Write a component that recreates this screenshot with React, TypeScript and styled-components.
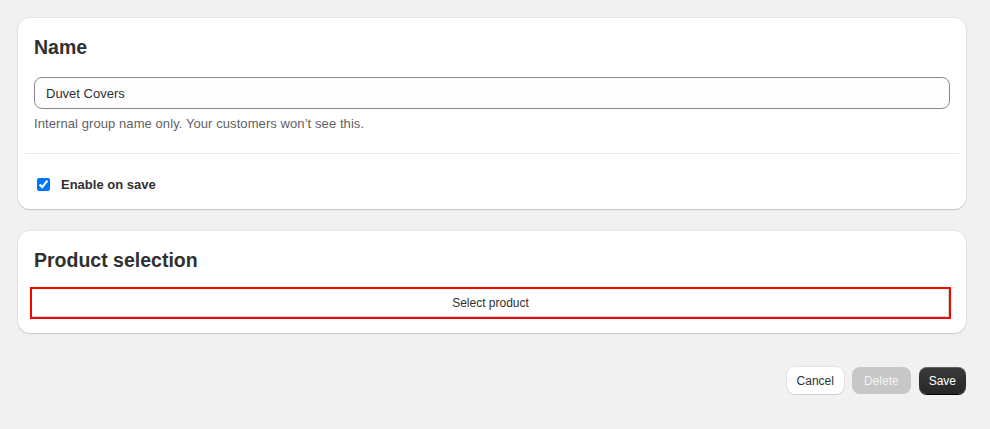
import React from "react";
import styled, { createGlobalStyle } from "styled-components";

const GlobalStyle = createGlobalStyle`
  html, body {
    margin: 0;
    padding: 0;
    background: #f1f1f1;
    font-family: "Liberation Sans", Arial, sans-serif;
    color: #303030;
  }
`;

const Page = styled.div`
  box-sizing: border-box;
  width: 990px;
  min-height: 429px;
  padding: 18px 24px 18px 18px;
  display: flex;
  flex-direction: column;
  gap: 22px;
`;

const Card = styled.section`
  background: #ffffff;
  border-radius: 12px;
  box-shadow: 0 1px 0 rgba(0, 0, 0, 0.07), 0 0 0 1px rgba(0, 0, 0, 0.04),
    0 1px 2px rgba(0, 0, 0, 0.08);
  padding: 17px 16px 14px;
  display: flex;
  flex-direction: column;
`;

const Title = styled.h2`
  margin: 0;
  font-size: 19.5px;
  line-height: 24px;
  font-weight: 700;
  color: #303030;
`;

const TextInput = styled.input`
  box-sizing: border-box;
  margin-top: 18px;
  width: 100%;
  height: 32px;
  padding: 0 11px;
  border: 1px solid #8a8a8a;
  border-radius: 8px;
  background: #fdfdfd;
  font-family: inherit;
  font-size: 13px;
  color: #303030;
  outline: none;
`;

const Help = styled.p`
  margin: 6px 0 0;
  font-size: 13px;
  line-height: 18px;
  letter-spacing: 0.08px;
  color: #616161;
`;

const Divider = styled.hr`
  border: 0;
  border-top: 1px solid #ebebeb;
  margin: 20px -9px 0;
`;

const CheckRow = styled.label`
  display: flex;
  align-items: center;
  gap: 11px;
  margin-top: 23px;
  margin-bottom: 3px;
  padding-left: 3px;
  font-size: 13px;
  font-weight: 700;
  color: #303030;

  input {
    margin: 0;
    width: 13px;
    height: 13px;
    accent-color: #0075ff;
  }
`;

const SelectButton = styled.button`
  box-sizing: border-box;
  margin: 15px -1px 0 -4px;
  height: 32px;
  border: 2px solid #ff0000;
  background: #ffffff;
  box-shadow: inset -1px -1px 0 #d4d4d4;
  font-family: inherit;
  font-size: 12px;
  color: #303030;
  cursor: pointer;
`;

const Actions = styled.div`
  display: flex;
  justify-content: flex-end;
  gap: 8px;
  margin-top: 12px;
`;

const Action = styled.button<{ $variant: "plain" | "disabled" | "primary" }>`
  height: 27px;
  padding: 0 ${(p) => (p.$variant === "disabled" ? "12px" : "10px")};
  border-radius: 8px;
  border: 0;
  font-family: inherit;
  font-size: 12px;
  cursor: pointer;
  background: ${(p) =>
    p.$variant === "primary"
      ? "linear-gradient(#3a3a3a, #262626)"
      : p.$variant === "disabled"
      ? "#c7c7c7"
      : "#ffffff"};
  color: ${(p) =>
    p.$variant === "plain" ? "#303030" : p.$variant === "disabled" ? "#f3f3f3" : "#ffffff"};
  box-shadow: ${(p) =>
    p.$variant === "primary"
      ? "0 1px 0 #000, inset 0 1px 0 rgba(255,255,255,0.2)"
      : p.$variant === "plain"
      ? "0 1px 0 #cfcfcf, 0 0 0 1px #e3e3e3"
      : "none"};
`;

export default function App() {
  return (
    <>
      <GlobalStyle />
      <Page>
        <Card>
          <Title>Name</Title>
          <TextInput defaultValue="Duvet Covers" />
          <Help>Internal group name only. Your customers won’t see this.</Help>
          <Divider />
          <CheckRow>
            <input type="checkbox" defaultChecked />
            Enable on save
          </CheckRow>
        </Card>
        <Card>
          <Title>Product selection</Title>
          <SelectButton>Select product</SelectButton>
        </Card>
        <Actions>
          <Action $variant="plain">Cancel</Action>
          <Action $variant="disabled" disabled>
            Delete
          </Action>
          <Action $variant="primary">Save</Action>
        </Actions>
      </Page>
    </>
  );
}
